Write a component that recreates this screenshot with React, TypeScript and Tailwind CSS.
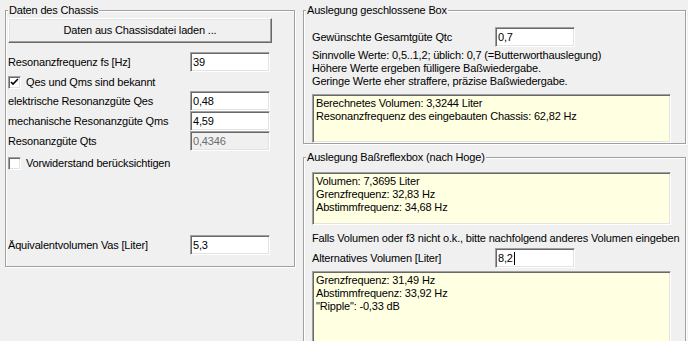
import React from "react";

const editCls =
  "h-[20px] w-[80px] border border-[#a0a0a0] border-b-white border-r-white shadow-[inset_1px_1px_0_#696969,inset_-1px_-1px_0_#e3e3e3] px-[2px] leading-[16px]";

const GroupBox: React.FC<{ title: string; className?: string; children: React.ReactNode }> = ({
  title,
  className = "",
  children,
}) => (
  <div
    className={`relative border border-[#a0a0a0] shadow-[inset_1px_1px_0_#fff,1px_1px_0_#fff] ${className}`}
  >
    <span className="absolute -top-[7px] left-[2px] bg-[#f0f0f0] px-[1px] leading-[13px]">{title}</span>
    {children}
  </div>
);

const Edit: React.FC<{ value: string; disabled?: boolean; caret?: boolean }> = ({ value, disabled, caret }) => (
  <div className={`${editCls} ${disabled ? "bg-[#f0f0f0] text-[#6d6d6d]" : "bg-white"} flex items-center`}>
    <span>{value}</span>
    {caret && <span className="ml-[1px] h-[13px] w-[1px] bg-black" />}
  </div>
);

const CheckBox: React.FC<{ checked?: boolean; label: string }> = ({ checked, label }) => (
  <div className="flex h-[18px] items-center">
    <div className="flex h-[13px] w-[13px] items-center justify-center border border-[#a0a0a0] border-b-white border-r-white bg-white shadow-[inset_1px_1px_0_#696969,inset_-1px_-1px_0_#e3e3e3]">
      {checked && (
        <svg width="9" height="9" viewBox="0 0 9 9">
          <path d="M1 4 L3 6 L8 1" stroke="#000" strokeWidth="1.6" fill="none" />
        </svg>
      )}
    </div>
    <span className="ml-[5px]">{label}</span>
  </div>
);

const Row: React.FC<{ label: string; children: React.ReactNode }> = ({ label, children }) => (
  <div className="flex h-[20px] items-center justify-between">
    <span>{label}</span>
    {children}
  </div>
);

const Memo: React.FC<{ lines: string[]; className?: string }> = ({ lines, className = "" }) => (
  <div
    className={`w-[359px] border border-[#a0a0a0] border-b-white border-r-white bg-[#ffffe1] shadow-[inset_1px_1px_0_#696969,inset_-1px_-1px_0_#e3e3e3] px-[3px] pt-[2px] leading-[13px] ${className}`}
  >
    {lines.map((l) => (
      <div key={l}>{l}</div>
    ))}
  </div>
);

export default function App() {
  return (
    <div
      className="relative flex h-[341px] w-[688px] overflow-hidden bg-[#f0f0f0] text-[11px] tracking-[-0.17px] text-black"
      style={{ fontFamily: '"Liberation Sans", Arial, sans-serif' }}
    >
      {/* Left: Daten des Chassis */}
      <div className="ml-[5px] mt-[10px]">
        <GroupBox title="Daten des Chassis" className="h-[257px] w-[290px]">
          <div className="flex w-[264px] flex-col pl-[2px] pt-[7px]">
            <button className="h-[25px] w-[264px] border border-white border-b-[#696969] border-r-[#696969] bg-[#f0f0f0] shadow-[inset_-1px_-1px_0_#a0a0a0,inset_1px_1px_0_#e3e3e3]">
              Daten aus Chassisdatei laden ...
            </button>
            <div className="mt-[9px]">
              <Row label="Resonanzfrequenz fs [Hz]">
                <Edit value="39" />
              </Row>
            </div>
            <div className="mt-[1px]">
              <CheckBox checked label="Qes und Qms sind bekannt" />
            </div>
            <Row label="elektrische Resonanzgüte Qes">
              <Edit value="0,48" />
            </Row>
            <Row label="mechanische Resonanzgüte Qms">
              <Edit value="4,59" />
            </Row>
            <Row label="Resonanzgüte Qts">
              <Edit value="0,4346" disabled />
            </Row>
            <div className="mt-[3px]">
              <CheckBox label="Vorwiderstand berücksichtigen" />
            </div>
            <div className="mt-[63px]">
              <Row label="Äquivalentvolumen Vas [Liter]">
                <Edit value="5,3" />
              </Row>
            </div>
          </div>
        </GroupBox>
      </div>

      {/* Right column */}
      <div className="ml-[8px] mt-[10px] flex flex-col">
        <GroupBox title="Auslegung geschlossene Box" className="h-[145px] w-[383px]">
          <div className="flex flex-col pl-[8px] pt-[16px]">
            <div className="flex h-[20px] items-center">
              <span className="w-[183px]">Gewünschte Gesamtgüte Qtc</span>
              <Edit value="0,7" />
            </div>
            <div className="mt-[2px] leading-[13px]">
              <div>Sinnvolle Werte: 0,5..1,2; üblich: 0,7 (=Butterworthauslegung)</div>
              <div>Höhere Werte ergeben fülligere Baßwiedergabe.</div>
              <div>Geringe Werte eher straffere, präzise Baßwiedergabe.</div>
            </div>
            <Memo
              className="mt-[6px] h-[49px]"
              lines={["Berechnetes Volumen: 3,3244 Liter", "Resonanzfrequenz des eingebauten Chassis: 62,82 Hz"]}
            />
          </div>
        </GroupBox>

        <GroupBox title="Auslegung Baßreflexbox (nach Hoge)" className="mt-[13px] h-[200px] w-[383px]">
          <div className="flex flex-col pl-[8px] pt-[14px]">
            <Memo
              className="h-[53px]"
              lines={["Volumen: 7,3695 Liter", "Grenzfrequenz: 32,83 Hz", "Abstimmfrequenz: 34,68 Hz"]}
            />
            <div className="mt-[7px] whitespace-nowrap leading-[13px]">
              Falls Volumen oder f3 nicht o.k., bitte nachfolgend anderes Volumen eingeben
            </div>
            <div className="mt-[3px] flex h-[20px] items-center">
              <span className="w-[183px]">Alternatives Volumen [Liter]</span>
              <Edit value="8,2" caret />
            </div>
            <Memo
              className="mt-[3px] h-[80px]"
              lines={["Grenzfrequenz: 31,49 Hz", "Abstimmfrequenz: 33,92 Hz", "\"Ripple\": -0,33 dB"]}
            />
          </div>
        </GroupBox>
      </div>
    </div>
  );
}
